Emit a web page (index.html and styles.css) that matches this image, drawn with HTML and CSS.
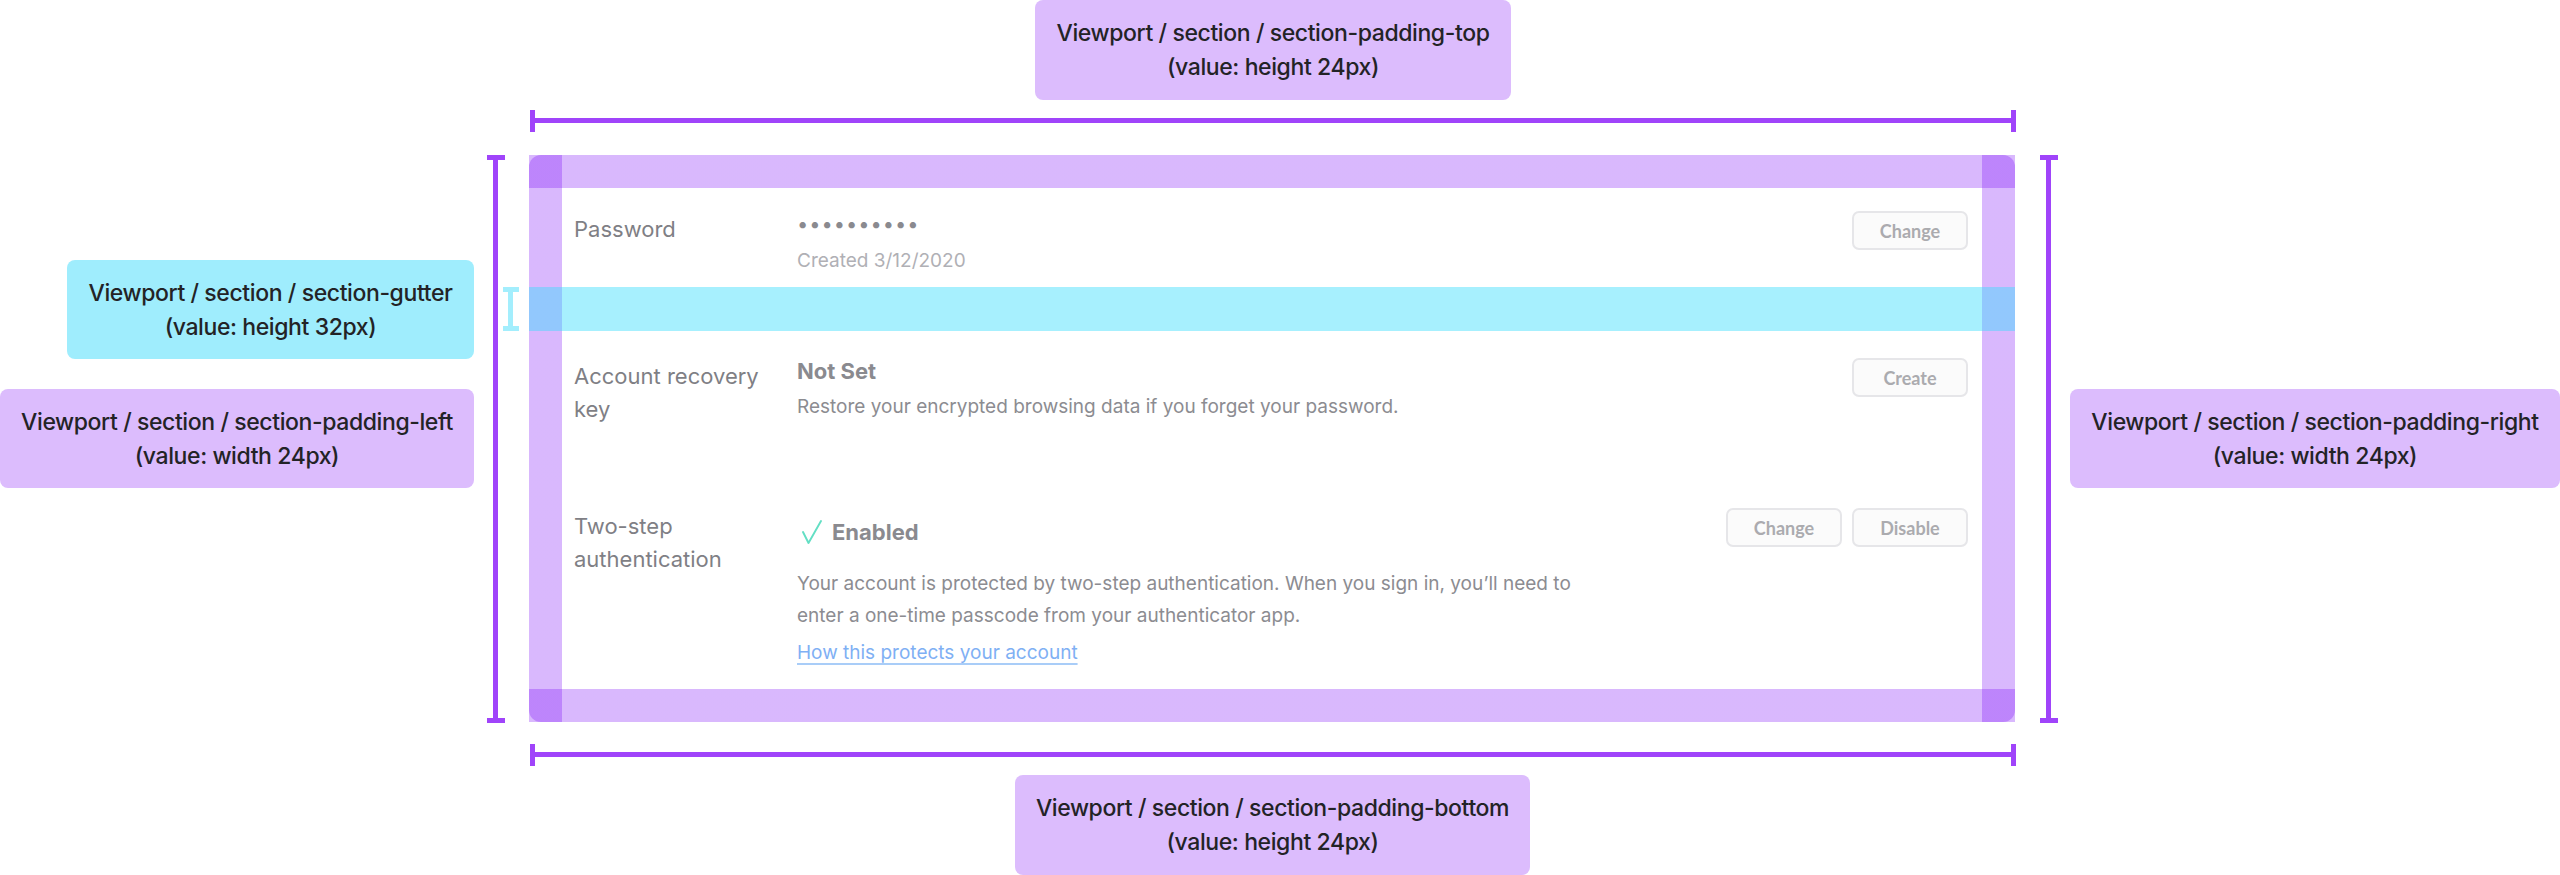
FILE: index.html
```html
<!DOCTYPE html>
<html lang="en">
<head>
    <meta charset="UTF-8">
    <meta name="viewport" content="width=device-width, initial-scale=1.0">
    <title>Viewport / section spacing</title>
    <link rel="stylesheet" href="styles.css">
</head>
<body>
    <div class="canvas">
        <!-- annotations -->
        <div class="note note-top">Viewport / section / section-padding-top<br>(value: height 24px)</div>
        <div class="note note-gutter">Viewport / section / section-gutter<br>(value: height 32px)</div>
        <div class="note note-left">Viewport / section / section-padding-left<br>(value: width 24px)</div>
        <div class="note note-right">Viewport / section / section-padding-right<br>(value: width 24px)</div>
        <div class="note note-bottom">Viewport / section / section-padding-bottom<br>(value: height 24px)</div>

        <div class="dim dim-h dim-top"></div>
        <div class="dim dim-h dim-bottom"></div>
        <div class="dim dim-v dim-left"></div>
        <div class="dim dim-v dim-right"></div>
        <div class="gap-mark"></div>

        <div class="frame">
            <section class="section">
                <div class="row row-first">
                    <div class="row-label">Password</div>
                    <div class="row-body">
                        <div class="secret">••••••••••</div>
                        <div class="desc muted">Created 3/12/2020</div>
                    </div>
                    <div class="row-actions">
                        <button class="btn">Change</button>
                    </div>
                </div>

                <div class="gutter gutter-marked"></div>

                <div class="row row-recovery">
                    <div class="row-label">Account recovery key</div>
                    <div class="row-body">
                        <div class="status">Not Set</div>
                        <div class="desc">Restore your encrypted browsing data if you forget your password.</div>
                    </div>
                    <div class="row-actions">
                        <button class="btn">Create</button>
                    </div>
                </div>

                <div class="gutter"></div>

                <div class="row row-last">
                    <div class="row-label">Two-step authentication</div>
                    <div class="row-body">
                        <div class="status status-ok">
                            <svg class="check" width="26" height="24" viewBox="0 0 26 24">
                                <path d="M4 12 L9.5 23 L22 1" fill="none" stroke="#63dfc4" stroke-width="1.9" stroke-linecap="round" stroke-linejoin="round"/>
                            </svg>
                            Enabled
                        </div>
                        <div class="desc desc-wide">Your account is protected by two-step authentication. When you sign in, you’ll need to enter a one-time passcode from your authenticator app.</div>
                        <a class="link" href="#">How this protects your account</a>
                    </div>
                    <div class="row-actions">
                        <button class="btn">Change</button>
                        <button class="btn">Disable</button>
                    </div>
                </div>
            </section>
        </div>
    </div>
</body>
</html>
```

FILE: styles.css
```css
body {
    margin: 0;
    background: #fff;
    font-family: Inter, "Noto Sans", Arial, sans-serif;
}
.canvas {
    position: relative;
    width: 2560px;
    height: 875px;
    padding: 155px 0 0 529px;
    box-sizing: border-box;
    overflow: hidden;
}

/* annotation labels */
.note {
    position: absolute;
    height: 99px;
    display: flex;
    align-items: center;
    justify-content: center;
    text-align: center;
    border-radius: 8px;
    background: #dcbcfd;
    color: #232326;
    font-size: 23px;
    font-weight: 500;
    letter-spacing: -0.4px;
    line-height: 34px;
}
.note-top { left: 1035px; top: 0; width: 476px; height: 100px; }
.note-bottom { left: 1015px; top: 775px; width: 515px; height: 100px; }
.note-gutter { left: 67px; top: 260px; width: 407px; background: #9fedfd; }
.note-left { left: 0; top: 389px; width: 474px; }
.note-right { left: 2070px; top: 389px; width: 490px; }

/* dimension lines */
.dim {
    position: absolute;
    background: #a044fa;
}
.dim::before, .dim::after {
    content: "";
    position: absolute;
    background: #a044fa;
}
.dim-h { height: 5px; width: 1486px; left: 530px; }
.dim-h::before, .dim-h::after { width: 5px; height: 22px; top: -8px; }
.dim-h::before { left: 0; }
.dim-h::after { right: 0; }
.dim-top { top: 118px; }
.dim-bottom { top: 752px; }

.dim-v { width: 5px; height: 568px; top: 155px; }
.dim-v::before, .dim-v::after { height: 5px; width: 18px; left: -6px; }
.dim-v::before { top: 0; }
.dim-v::after { bottom: 0; }
.dim-left { left: 493px; }
.dim-right { left: 2046px; }

.gap-mark {
    position: absolute;
    left: 508px;
    top: 287px;
    width: 5px;
    height: 44px;
    background: #a3eefd;
}
.gap-mark::before, .gap-mark::after {
    content: "";
    position: absolute;
    left: -5px;
    width: 16px;
    height: 5px;
    background: #a3eefd;
}
.gap-mark::before { top: 0; }
.gap-mark::after { bottom: 0; }

/* the section being measured, padding shown as tinted bands */
.frame {
    width: 1486px;
    background: rgba(118, 0, 248, 0.28);
}
.section {
    --band: rgba(118, 0, 248, 0.28);
    border-radius: 12px;
    padding: 33px;
    background:
        linear-gradient(var(--band), var(--band)) top / 100% 33px no-repeat,
        linear-gradient(var(--band), var(--band)) bottom / 100% 33px no-repeat,
        linear-gradient(var(--band), var(--band)) left / 33px 100% no-repeat,
        linear-gradient(var(--band), var(--band)) right / 33px 100% no-repeat,
        #fff;
}
.gutter {
    height: 44px;
}
.gutter-marked {
    margin: 0 -33px;
    background: rgba(55, 220, 253, 0.44);
}

.row {
    display: flex;
    align-items: flex-start;
    padding: 27px 14px 11px 12px;
}
.row-first { padding-top: 23px; padding-bottom: 10px; }
.row-last { padding-bottom: 20px; }

.row-label {
    width: 200px;
    margin: 2px 23px 0 0;
    font-size: 22px;
    line-height: 33px;
    color: #7f7f85;
}
.row-body {
    flex: 1;
}
.row-actions {
    display: flex;
    gap: 10px;
}

.secret {
    font-size: 20px;
    line-height: 26px;
    letter-spacing: 1px;
    color: #8a8a8f;
}
.status {
    font-size: 22px;
    font-weight: 700;
    line-height: 26px;
    color: #8a8a8f;
}
.status-ok {
    display: flex;
    align-items: center;
    gap: 7px;
    margin-top: 11px;
}
.check {
    margin-left: 2px;
}
.desc {
    margin-top: 7px;
    font-size: 19px;
    line-height: 32px;
    color: #8c8c91;
}
.desc.muted {
    margin-top: 8px;
    color: #b0b0b5;
}
.desc-wide {
    max-width: 800px;
    margin-top: 23px;
}
.link {
    display: inline-block;
    margin-top: 5px;
    font-size: 19px;
    line-height: 32px;
    color: #7fb0f4;
    text-decoration: underline;
    text-decoration-color: #a9cdf8;
    text-decoration-thickness: 2px;
    text-underline-offset: 4px;
}

.btn {
    width: 116px;
    height: 39px;
    padding: 0;
    border: 2px solid #e6e6e9;
    border-radius: 7px;
    background: #fbfbfb;
    color: #ababaf;
    font-family: Lato, Inter, sans-serif;
    font-size: 18px;
    font-weight: 700;
    cursor: pointer;
}
```
